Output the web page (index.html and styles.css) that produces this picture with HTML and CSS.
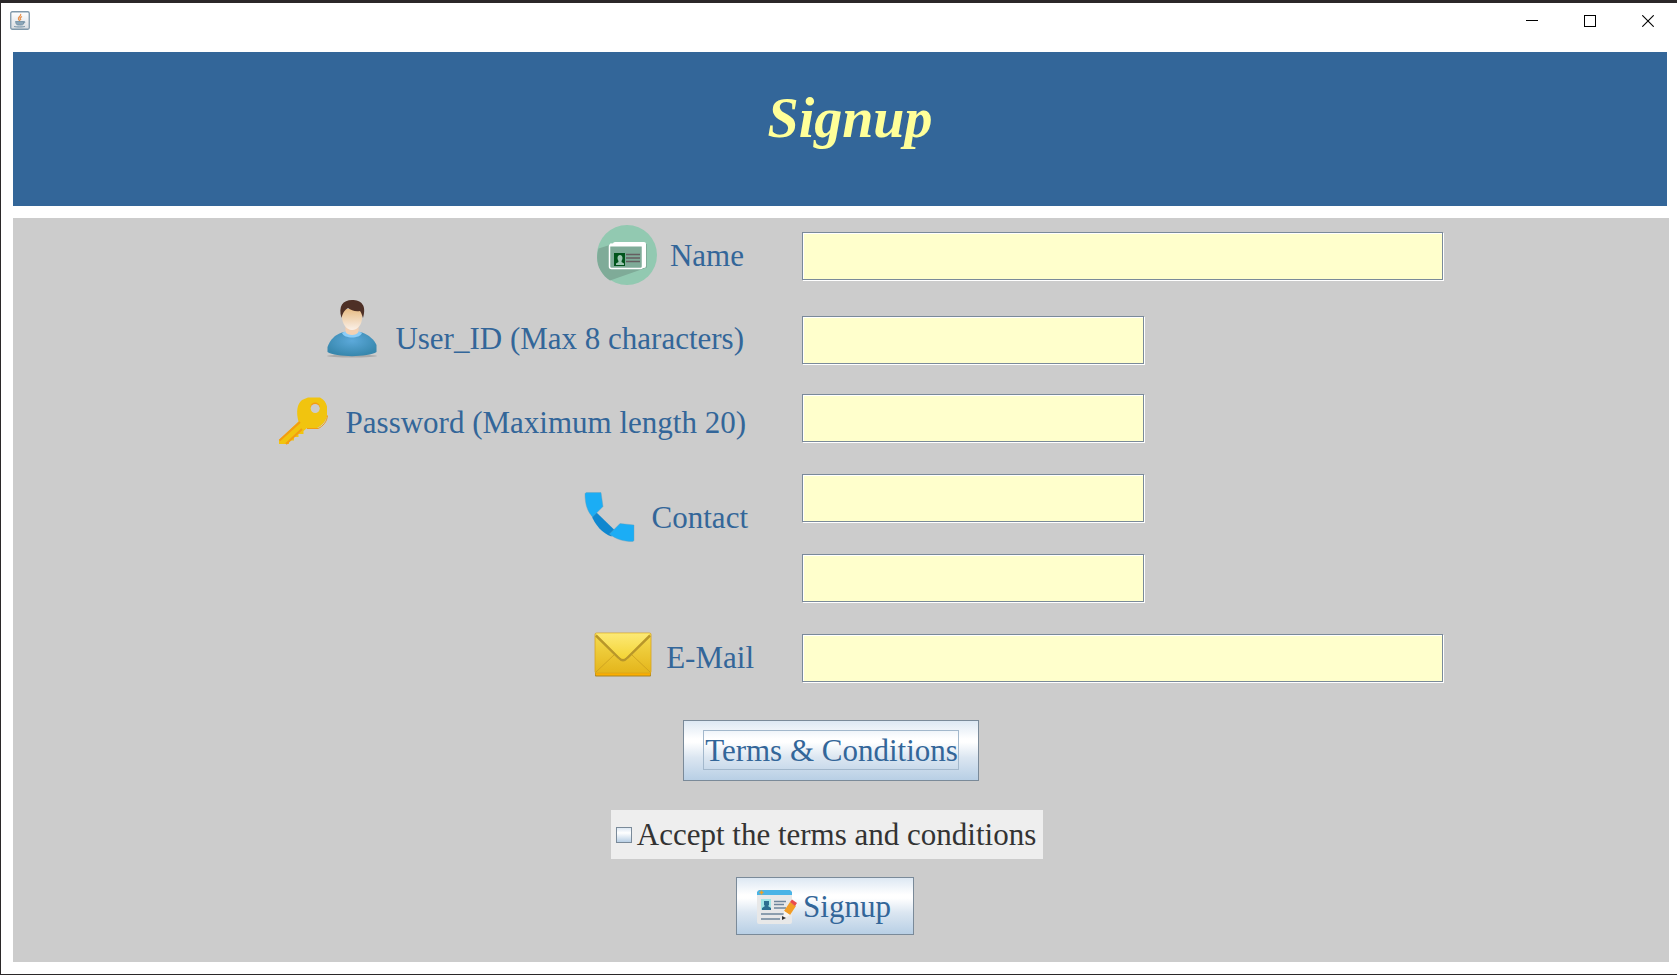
FILE: index.html
```html
<!DOCTYPE html>
<html lang="en">
<head>
<meta charset="utf-8">
<title>Signup</title>
<link rel="stylesheet" href="styles.css">
</head>
<body>
<div class="window">
  <header class="titlebar">
    <svg class="app-icon" width="20" height="19" viewBox="0 0 20 19" aria-hidden="true">
      <defs><linearGradient id="app" x2="0" y2="1"><stop offset="0" stop-color="#fff"/><stop offset="1" stop-color="#d9dde1"/></linearGradient></defs>
      <rect x=".75" y=".75" width="18.5" height="17.5" rx="1.5" fill="url(#app)" stroke="#7f98aa" stroke-width="1.3"/>
      <path d="M10.500 3c1.500 2-3 3-2 5 .3 1 1 1.200 1.200 2M12 5.500c-2 1-2.500 2-1 3.500" fill="none" stroke="#e8914c" stroke-width="1.300"/>
      <path d="M5.500 10.500h8v2c0 1.500-1.500 1.500-4 1.500s-3.500-.5-3.500-2zM13.500 10.500c2-.5 2 1.500-.5 2M4 15.500c3 .8 8 .8 11 0" fill="#8ba6b8" stroke="#7592a6" stroke-width=".9"/>
    </svg>
    <div class="window-controls">
      <button type="button" aria-label="Minimize"><svg width="12" height="12" viewBox="0 0 12 12"><path d="M0 5.500h12" stroke="#000"/></svg></button>
      <button type="button" aria-label="Maximize"><svg width="12" height="12" viewBox="0 0 12 12"><rect x=".5" y=".5" width="11" height="11" fill="none" stroke="#000"/></svg></button>
      <button type="button" aria-label="Close"><svg width="12" height="12" viewBox="0 0 12 12"><path d="M.3.3l11.400 11.400M11.700.3L.3 11.700" stroke="#000" stroke-width="1.100"/></svg></button>
    </div>
  </header>

  <div class="banner"><h1>Signup</h1></div>

  <form class="panel">
    <div class="fields">
      <label class="caption" for="name">
        <svg width="64" height="64" viewBox="0 0 64 64" aria-hidden="true">
          <circle cx="32" cy="31" r="30" fill="#92c9b1"/>
          <path d="M18 20L3.500 24.500C1 33 2 41 5.500 46.500 8 51 11 54 15 56.500L52 43.500V20z" fill="#7fab98"/>
          <rect x="18" y="18" width="33" height="26" rx="2" fill="#fff"/>
          <rect x="14.500" y="20.500" width="33" height="24" rx="2" fill="#7fab98" stroke="#fff" stroke-width="1.500"/>
          <path d="M15 19.500h32v3H15z" fill="#fff"/>
          <path d="M19 29h11v13H19z" fill="#00541b"/>
          <path d="M22.500 34c0-4 5-4 5 0 0 2-1 2-1 4l2.500 1.500V41h-8v-1.500l2.500-1.500c0-2-1-2-1-4z" fill="#9dc6b2"/>
          <path d="M31 30.500h14M31 34h14M31 37.500h14" stroke="#665e60" stroke-width="1.500"/>
        </svg>
        <span>Name</span>
      </label>
      <div class="entry"><input class="long" id="name" type="text"></div>

      <label class="caption caption-user" for="user">
        <svg width="64" height="64" viewBox="0 0 64 64" aria-hidden="true">
          <defs>
            <linearGradient id="face" x2="0" y2="1"><stop offset="0" stop-color="#e8bd86"/><stop offset="1" stop-color="#faf0e8"/></linearGradient>
            <radialGradient id="shirt" cy=".4" r=".6"><stop offset="0" stop-color="#5ca9da"/><stop offset="1" stop-color="#3787ad"/></radialGradient>
          </defs>
          <ellipse cx="32" cy="49" rx="25" ry="1.500" fill="#aaa"/>
          <path d="M22 25.500l10-2 10 2c7 2.500 12 7 14.500 12.500V45c-8 5.500-41 5.500-49 0v-5C10 33 15 27.500 22 25.500z" fill="url(#shirt)"/>
          <path d="M22 26l4-2h12l4 2c-2 6-18 6-20 0z" fill="#8bcdf8"/>
          <path d="M25.500 19h13v6c-2 4-11 4-13 0z" fill="#f3d0b2"/>
          <path d="M22 2h20v9c0 6-4 12-10 12S22 16 22 10z" fill="url(#face)"/>
          <path d="M21.500 11C18-1 23-7 32-7S47-2 43 11c-1-3-1.500-5-3-7-5 1-9-1-12-3-3 2-5 4-6.500 10z" fill="#4e3026"/>
        </svg>
        <span>User_ID (Max 8 characters)</span>
      </label>
      <div class="entry"><input class="short" id="user" type="text" maxlength="8"></div>

      <label class="caption caption-password" for="password">
        <svg width="64" height="64" viewBox="0 0 64 64" aria-hidden="true">
          <path d="M31 9L37 6.500h12c4 2 6 5 7 9v10c-2 6-5 9-10 11.500H36L32.500 40v3h-5v3H23v3.500h-5V53H8v-4l19.500-18.500C25 21 26 13 31 9z" fill="#f1c40f"/>
          <path d="M8.500 49.500L29 31M15 53l16-15" fill="none" stroke="#f39c12" stroke-width="2"/>
          <path d="M36 37.500h11c5-2 9-7 9.500-13" fill="none" stroke="#f39c12"/>
          <path d="M39.500 16c0-6 9-6 9.500 0" fill="#f39c12"/>
          <circle cx="44.200" cy="17.500" r="4.500" fill="#ccc"/>
        </svg>
        <span>Password (Maximum length 20)</span>
      </label>
      <div class="entry"><input class="short" id="password" type="text" maxlength="20"></div>

      <label class="caption caption-contact" for="contact">
        <svg width="64" height="64" viewBox="0 0 64 64" aria-hidden="true">
          <path d="M14.500 29l5-2.500L37.500 44l-3 6.500C26 48 17 38 14.500 29z" fill="#0f87cf"/>
          <path d="M8 8c0-1 1-1.500 2-1.500h14L26 20.500 15.500 31C9 24 8 15 8 8zM43 37.500l14 1.500V54c0 1-1 1.500-2 1.500-8 0-16-2-22.500-7.500z" fill="#1badf5" stroke="#6b9fb7" stroke-width=".4"/>
        </svg>
        <span>Contact</span>
      </label>
      <div class="entry"><input class="short" id="contact" type="tel"></div>
      <div class="entry"><input class="short" id="contact2" type="tel" aria-label="Second contact"></div>

      <label class="caption caption-email" for="email">
        <svg width="64" height="64" viewBox="0 0 64 64" aria-hidden="true">
          <defs><linearGradient id="mail" x2="0" y2="1"><stop offset="0" stop-color="#f5dc51"/><stop offset="1" stop-color="#e4b51b"/></linearGradient>
          <linearGradient id="flap" x2="0" y2="1"><stop offset="0" stop-color="#fce975"/><stop offset="1" stop-color="#f4d435"/></linearGradient></defs>
          <rect x="4" y="44" width="56" height="6.500" rx="1" fill="#a68429"/>
          <rect x="4.500" y="42" width="55" height="7.500" rx="1" fill="#fbae00"/>
          <rect x="4" y="7" width="56" height="40" rx="1.500" fill="url(#mail)" stroke="#d9a31c" stroke-width=".8"/>
          <path d="M5 46l18-17M59 46L41 29" stroke="#c99d1e" fill="none" stroke-width=".8"/>
          <path d="M5 9.500l22.500 22c3 3.500 6 3.500 9 0L59 9.500" fill="none" stroke="#b8962a" stroke-width="2.500"/>
          <path d="M5 7.500h54L36 30.500c-3 3-5 3-8 0z" fill="url(#flap)"/>
        </svg>
        <span>E-Mail</span>
      </label>
      <div class="entry"><input class="long" id="email" type="email"></div>
    </div>

    <div class="action action-terms">
      <button class="metal terms" type="button"><span>Terms &amp; Conditions</span></button>
    </div>
    <div class="action action-accept">
      <label class="accept"><input type="checkbox">Accept the terms and conditions</label>
    </div>
    <div class="action action-signup">
      <button class="metal signup" type="button">
        <svg width="40" height="35" viewBox="0 0 40 35" aria-hidden="true">
          <rect x="0" y="1" width="35" height="34" rx="2" fill="#e8e8e8"/>
          <path d="M0 6V3l2-2h31l2 2v3z" fill="#4bb4e6"/>
          <path d="M4.500 1.500v4M2.500 3.500h4" stroke="#f0a025" stroke-width="1.500"/>
          <path d="M4 10h10v11H4z" fill="#9fe5e5"/>
          <path d="M7 12h5v4l-1 1 3 2v2H5v-2l3-2-1-1z" fill="#2b6f91"/>
          <path d="M17 12.500h12M17 15.500h10M17 19h12M4 25h23M4 30h19" stroke="#6e859b" stroke-width="1.400"/>
          <path d="M33 13l6 4-6 9-6-4z" fill="#f29d25"/>
          <path d="M35 10.500l5 3.500-2 3-5-4z" fill="#e94b4d"/>
          <path d="M27 22l6 4-7 4z" fill="#f7f3ee"/>
          <path d="M25 27l4 2-4 2z" fill="#333"/>
        </svg>
        <span>Signup</span>
      </button>
    </div>
  </form>
</div>
</body>
</html>
```
FILE: styles.css
```css
* { box-sizing: border-box; }

body {
  margin: 0;
  font-family: "Liberation Serif", "Times New Roman", serif;
  font-size: 31px;
  line-height: 36px;
  color: #336699;
  background: #fff;
}

.window {
  display: flex;
  flex-direction: column;
  min-height: 100vh;
  padding: 0 8px 12px 12px;
  border: solid #2b2829;
  border-width: 3px 0 1px 1px;
  background: #fff;
}

.titlebar {
  display: flex;
  justify-content: space-between;
  height: 49px;
  margin-left: -3px;
}

.app-icon { margin-top: 8px; }

.window-controls {
  display: flex;
  height: 36px;
  margin-right: -8px;
}

.window-controls button {
  display: flex;
  align-items: center;
  justify-content: center;
  width: 58px;
  padding: 0;
  border: 0;
  background: none;
}

.banner {
  margin: 0 2px 12px 0;
  padding: 34px 0 56px 20px;
  background: #336699;
}

h1 {
  margin: 0;
  font-size: 56px;
  line-height: 64px;
  font-style: italic;
  font-weight: bold;
  text-align: center;
  color: #ffff99;
}

.panel {
  flex: 1;
  background: #ccc;
}

.fields {
  display: grid;
  grid-template-columns: 789fr 867fr;
  grid-template-rows: 84px 78px 80px 80px 80px 80px;
  align-items: start;
}

.caption {
  display: flex;
  align-items: center;
  justify-content: flex-end;
  gap: 11px;
  padding: 6px 58px 0 0;
}

.caption svg { overflow: visible; flex: none; }
.caption-user { padding-top: 5px; }
.caption-password { padding: 11px 56px 0 0; }
.caption-contact { grid-row: span 2; padding: 26px 54px 0 0; }
.caption-email { padding-right: 48px; }

.entry { padding-top: 14px; }

.entry input {
  display: block;
  max-width: 100%;
  height: 48px;
  padding: 0 8px;
  border: 1px solid #7a8a99;
  border-radius: 0;
  outline: 0;
  background: #ffffcc;
  box-shadow: 1px 1px 0 #fff, inset 1px 1px 0 #fff;
  font: inherit;
  color: #336699;
}

.entry .long { width: 641px; }
.entry .short { width: 342px; }

.action {
  display: flex;
  justify-content: center;
}

.action-terms { padding: 20px 20px 0 0; }
.action-accept { padding: 29px 28px 0 0; }
.action-signup { padding: 18px 32px 24px 0; }

.metal {
  display: flex;
  align-items: center;
  border: 1px solid #7a8a99;
  background: linear-gradient(#dde8f3, #fff 30%, #fff 36%, #dbe6f1 62%, #b8cfe5);
  font: inherit;
  color: #336699;
}

.terms { padding: 9px 19px 10px; }

.terms span {
  padding: 2px 0 0 1px;
  border: 1px solid #a3b8cc;
}

.signup {
  gap: 6px;
  height: 58px;
  padding: 0 22px 0 20px;
}

.signup span { padding-top: 2px; }

.accept {
  display: flex;
  align-items: center;
  gap: 5px;
  height: 49px;
  padding: 0 7px 0 5px;
  background: #eee;
  color: #333;
}

.accept input {
  appearance: none;
  width: 16px;
  height: 16px;
  margin: 0;
  border: 1px solid #7a8a99;
  background: linear-gradient(#dde8f3, #fff 35%, #b8cfe5);
}
```
